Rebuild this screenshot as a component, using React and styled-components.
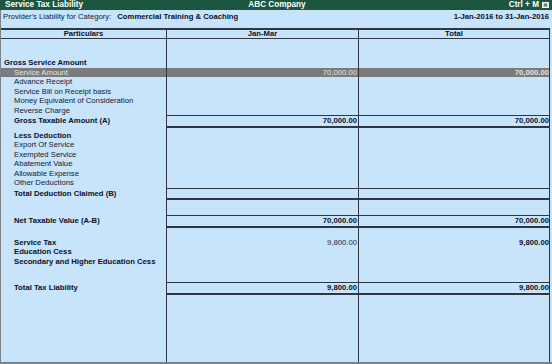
import React from 'react';
import styled, { createGlobalStyle } from 'styled-components';

const line = '#2e3842';

const GlobalStyle = createGlobalStyle`
  html, body {
    margin: 0;
    padding: 0;
  }

  body {
    width: 552px;
    height: 364px;
    overflow: hidden;
    background: #c8e4fb;
    font-family: "Liberation Sans", Arial, sans-serif;
  }
`;

const Page = styled.div`
  display: flex;
  flex-direction: column;
  width: 552px;
  height: 364px;
  background: #c8e4fb;
  color: #111a32;
  font-size: 7.7px;
`;

const TitleBar = styled.div`
  display: grid;
  grid-template-columns: 1fr auto 1fr;
  align-items: center;
  height: 10px;
  padding: 0 3px 0 5px;
  background: #1b5641;
  color: #ffffff;
  font-size: 8.2px;
  font-weight: bold;
  line-height: 10px;
`;

const TitleRight = styled.div`
  display: flex;
  align-items: center;
  justify-content: flex-end;
  gap: 3px;
`;

const CloseBox = styled.span`
  display: flex;
  align-items: center;
  justify-content: center;
  width: 7px;
  height: 6px;
  background: #d4d8d6;
  border: 1px solid #f0f4f2;
  box-sizing: border-box;
`;

const Frame = styled.div`
  flex: 1;
  display: flex;
  flex-direction: column;
  min-height: 0;
  border-left: 1px solid #7d8288;
  border-bottom: 2px solid #7d8288;
`;

const InfoRow = styled.div`
  display: flex;
  justify-content: space-between;
  height: 18px;
  box-sizing: border-box;
  padding: 2px 3px 0 2px;
  line-height: 9.5px;
  white-space: nowrap;
`;

const Strong = styled.b`
  margin-left: ${p => p.$gap || 0}px;
  color: #0a1128;
`;

const Table = styled.div`
  flex: 1;
  display: flex;
  flex-direction: column;
  width: 549px;
  box-sizing: border-box;
  border-right: 1px solid ${line};
`;

const RowGrid = styled.div`
  display: grid;
  grid-template-columns: 166px 192px 190px;
  background: ${p => (p.$selected ? '#7b7b7b' : 'transparent')};
  color: ${p => (p.$selected ? '#e4e4e4' : 'inherit')};
  line-height: 9.5px;
  white-space: nowrap;
`;

const HeaderRow = styled(RowGrid)`
  border-top: 2px solid ${line};
  border-bottom: 1px solid ${line};
  line-height: 8px;
  font-weight: bold;
  color: #0a1128;
  text-align: center;
`;

const HeadCell = styled.div`
  border-right: ${p => (p.$edge ? 'none' : `1px solid ${line}`)};
`;

const GapRow = styled(RowGrid)`
  height: ${p => p.$h}px;
  flex: ${p => (p.$fill ? 1 : 'none')};
`;

const EmptyCell = styled.div`
  border-right: ${p => (p.$edge ? 'none' : `1px solid ${line}`)};
`;

const LabelCell = styled.div`
  padding-left: ${p => (p.$head ? 3 : 13)}px;
  padding-top: ${p => (p.$sum ? 1 : 0)}px;
  padding-bottom: ${p => (p.$sum ? 2 : 0)}px;
  border-right: 1px solid ${line};
  font-weight: ${p => (p.$bold ? 'bold' : 'normal')};
  color: ${p => (p.$bold ? '#0a1128' : 'inherit')};
`;

const AmountCell = styled.div`
  padding-right: ${p => (p.$edge ? 0 : 1)}px;
  border-right: ${p => (p.$edge ? 'none' : `1px solid ${line}`)};
  border-top: ${p => (p.$sum ? `1px solid ${line}` : 'none')};
  border-bottom: ${p => (p.$sum ? `2px solid ${line}` : 'none')};
  text-align: right;
  font-weight: ${p => (p.$bold ? 'bold' : 'normal')};
  color: ${p => (p.$light ? '#e4e4e4' : p.$bold ? '#0a1128' : '#22293a')};
`;

const rows = [
  { gap: 19 },
  { label: 'Gross Service Amount', head: true, bold: true },
  { label: 'Service Amount', jan: '70,000.00', total: '70,000.00', selected: true },
  { label: 'Advance Receipt' },
  { label: 'Service Bill on Receipt basis' },
  { label: 'Money Equivalent of Consideration' },
  { label: 'Reverse Charge' },
  { label: 'Gross Taxable Amount (A)', bold: true, sum: true, jan: '70,000.00', total: '70,000.00' },
  { gap: 3 },
  { label: 'Less Deduction', bold: true },
  { label: 'Export Of Service' },
  { label: 'Exempted Service' },
  { label: 'Abatement Value' },
  { label: 'Allowable Expense' },
  { label: 'Other Deductions' },
  { label: 'Total Deduction Claimed (B)', bold: true, sum: true },
  { gap: 15 },
  { label: 'Net Taxable Value (A-B)', bold: true, sum: true, jan: '70,000.00', total: '70,000.00' },
  { gap: 10 },
  { label: 'Service Tax', bold: true, jan: '9,800.00', total: '9,800.00' },
  { label: 'Education Cess', bold: true },
  { label: 'Secondary and Higher Education Cess', bold: true },
  { gap: 16 },
  { label: 'Total Tax Liability', bold: true, sum: true, jan: '9,800.00', total: '9,800.00' },
];

const Blank = ({ h, fill }) => (
  <GapRow $h={h} $fill={fill}>
    <EmptyCell />
    <EmptyCell />
    <EmptyCell $edge />
  </GapRow>
);

const App = () => (
  <Page>
    <GlobalStyle />
    <TitleBar>
      <span>Service Tax Liability</span>
      <span>ABC Company</span>
      <TitleRight>
        <span>Ctrl + M</span>
        <CloseBox>
          <svg width="5" height="4" viewBox="0 0 5 4">
            <path d="M0.8 0.4 L4.2 3.6 M4.2 0.4 L0.8 3.6" stroke="#3a3f44" strokeWidth="1" />
          </svg>
        </CloseBox>
      </TitleRight>
    </TitleBar>
    <Frame>
      <InfoRow>
        <span>
          Provider's Liability for Category:
          <Strong $gap={6}>Commercial Training &amp; Coaching</Strong>
        </span>
        <Strong>1-Jan-2016 to 31-Jan-2016</Strong>
      </InfoRow>
      <Table>
        <HeaderRow>
          <HeadCell>Particulars</HeadCell>
          <HeadCell>Jan-Mar</HeadCell>
          <HeadCell $edge>Total</HeadCell>
        </HeaderRow>
        {rows.map((r, i) =>
          r.gap ? (
            <Blank key={i} h={r.gap} />
          ) : (
            <RowGrid key={i} $selected={r.selected}>
              <LabelCell $head={r.head} $bold={r.bold} $sum={r.sum}>
                {r.label}
              </LabelCell>
              <AmountCell $sum={r.sum} $bold={r.sum} $light={r.selected}>
                {r.jan}
              </AmountCell>
              <AmountCell $edge $sum={r.sum} $bold $light={r.selected}>
                {r.total}
              </AmountCell>
            </RowGrid>
          )
        )}
        <Blank h={0} fill />
      </Table>
    </Frame>
  </Page>
);

export default App;
